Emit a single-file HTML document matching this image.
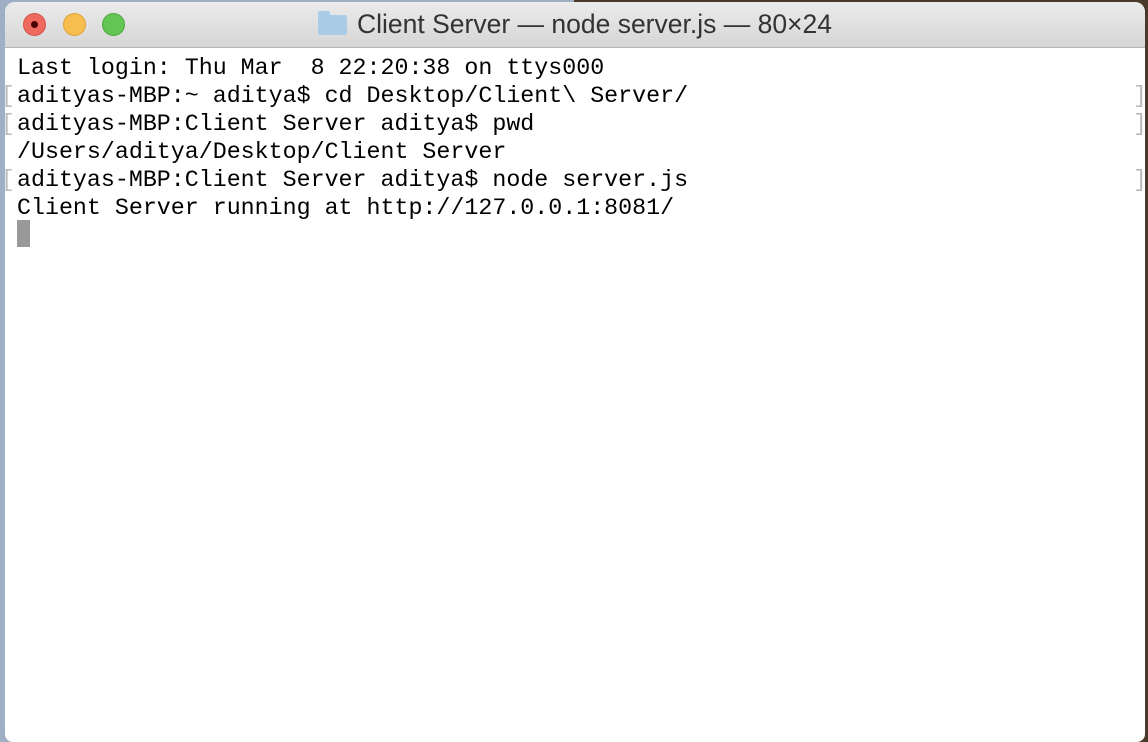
<!DOCTYPE html>
<html><head><style>
html,body{margin:0;padding:0;width:1148px;height:734px;overflow:hidden;}
body{background:linear-gradient(90deg,#9fb0c6 0,#9fb0c6 50%,#4a3a2c 50%,#4a3a2c 100%);}
.win{position:absolute;left:5px;top:2px;width:1140px;height:740px;background:#fff;border-radius:10px 10px 8px 8px;overflow:hidden;}
.title{height:45px;background:linear-gradient(#ebebeb,#d6d6d6);border-bottom:1px solid #b5b5b5;position:relative;}
.b{position:absolute;top:11px;width:21px;height:21px;border-radius:50%;}
.t{position:absolute;left:0;right:0;top:7px;text-align:center;font:26.5px "Liberation Sans",sans-serif;color:#333;}
.fold{display:inline-block;width:29px;height:20px;background:#a9cde9;border-radius:2px;vertical-align:-2px;margin-right:10px;position:relative;}
.fold:before{content:"";position:absolute;left:0;top:-4px;width:12px;height:5px;background:#a9cde9;border-radius:2px 2px 0 0;}
pre{margin:0;position:absolute;left:12px;top:52px;font:23.3px/28px "Liberation Mono",monospace;color:#000;}
.cur{position:absolute;left:12px;top:218px;width:13px;height:27px;background:#999;}
.br{position:absolute;font:23px/28px "Liberation Mono",monospace;color:#bbb;}
</style></head><body>
<div class="win">
<div class="title">
<div class="b" style="left:18px;background:#ee6a5f;border:1px solid #d5544a"><div style="position:absolute;left:7px;top:7px;width:7px;height:7px;border-radius:50%;background:#4d0000"></div></div>
<div class="b" style="left:58px;background:#f6be4f;border:1px solid #dea236"></div>
<div class="b" style="left:97px;background:#62c554;border:1px solid #4ea93f"></div>
<div class="t"><span class="fold"></span>Client Server — node server.js — 80×24</div>
</div>
<pre>Last login: Thu Mar  8 22:20:38 on ttys000
adityas-MBP:~ aditya$ cd Desktop/Client\ Server/
adityas-MBP:Client Server aditya$ pwd
/Users/aditya/Desktop/Client Server
adityas-MBP:Client Server aditya$ node server.js
Client Server running at http://127.0.0.1:8081/</pre>
<div class="cur"></div>
<div class="br" style="left:-4px;top:80px">[</div>
<div class="br" style="left:-4px;top:108px">[</div>
<div class="br" style="left:-4px;top:164px">[</div>
<div class="br" style="left:1128px;top:80px">]</div>
<div class="br" style="left:1128px;top:108px">]</div>
<div class="br" style="left:1128px;top:164px">]</div>
</div>
</body></html>
